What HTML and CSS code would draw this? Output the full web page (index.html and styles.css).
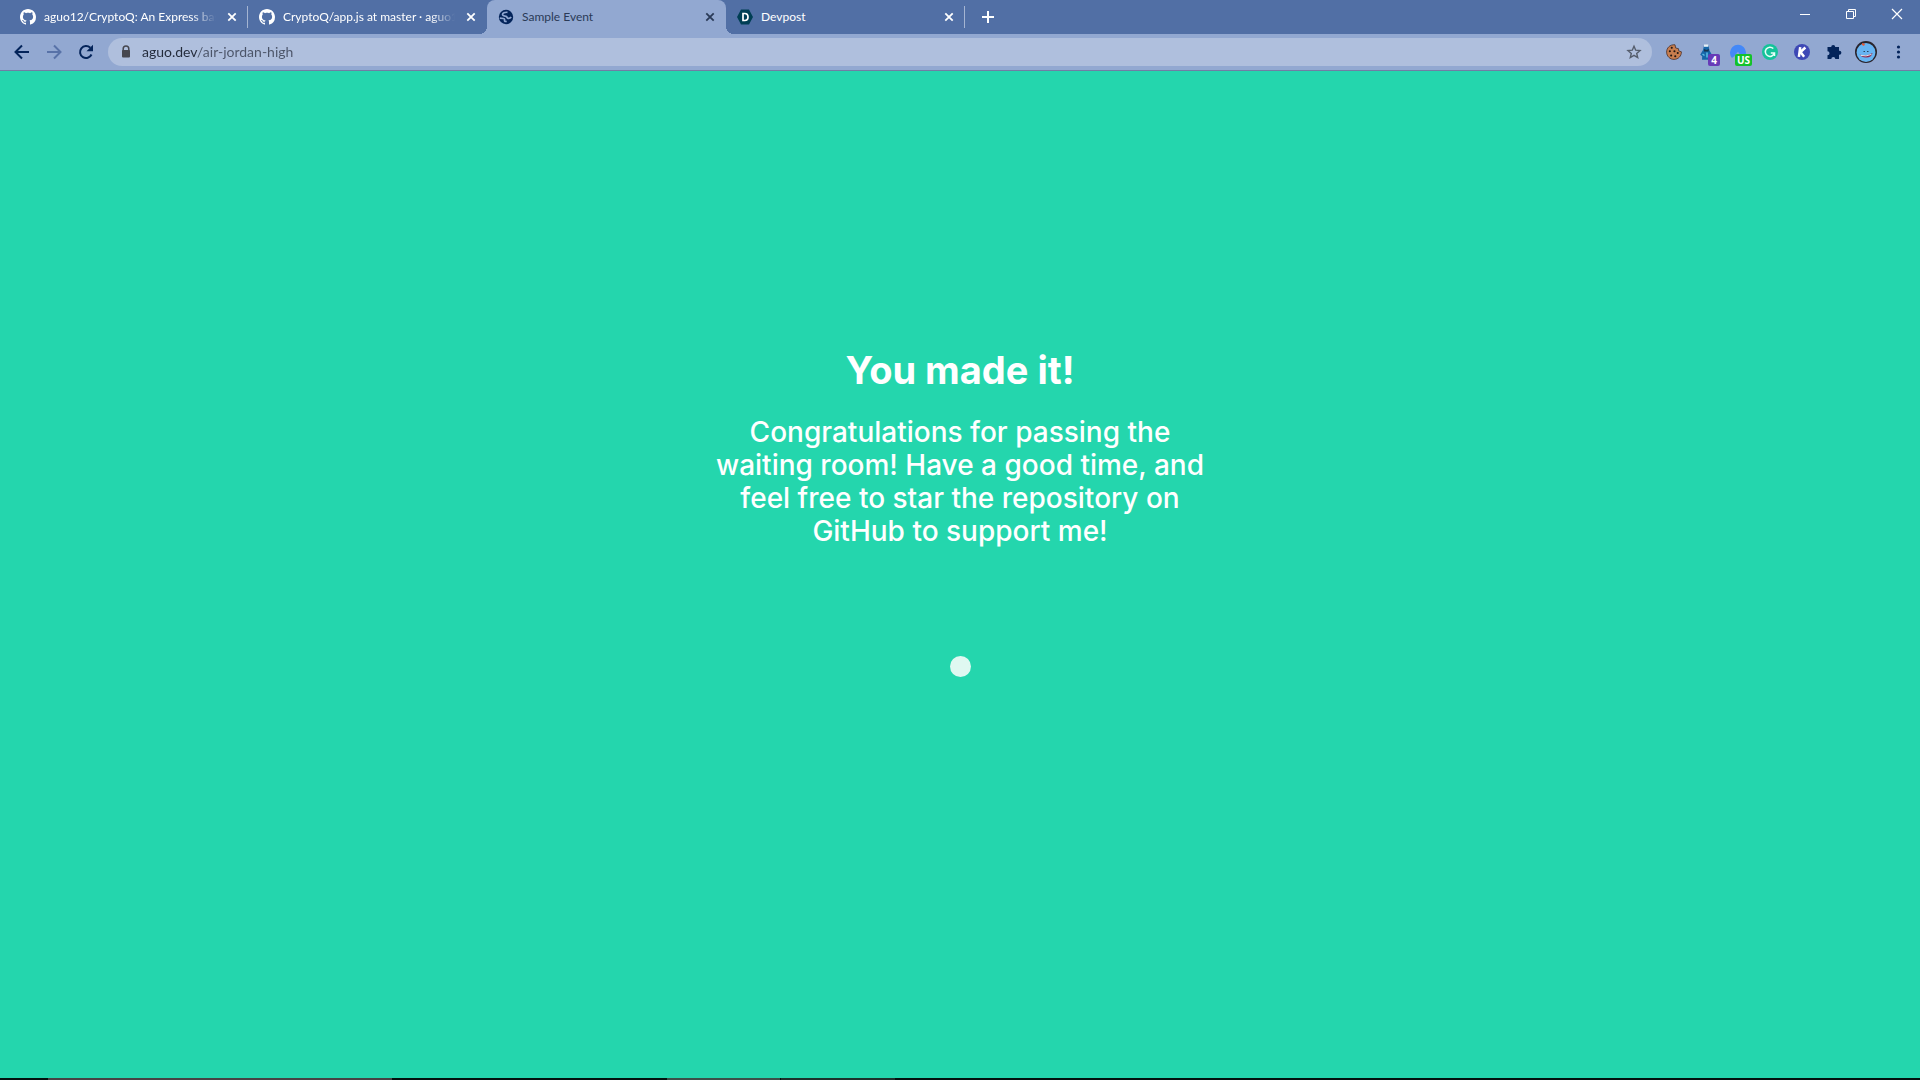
FILE: index.html
```html
<!DOCTYPE html>
<html lang="en">
<head>
<meta charset="utf-8">
<title>Sample Event</title>
<link rel="stylesheet" href="styles.css">
</head>
<body>
<svg class="defs" aria-hidden="true">
  <symbol id="github" viewBox="0 0 16 16"><path d="M8 0C3.58 0 0 3.58 0 8c0 3.54 2.29 6.53 5.47 7.59.4.07.55-.17.55-.38 0-.19-.01-.82-.01-1.49-2.01.37-2.53-.49-2.69-.94-.09-.23-.48-.94-.82-1.13-.28-.15-.68-.52-.01-.53.63-.01 1.08.58 1.23.82.72 1.21 1.87.87 2.33.66.07-.52.28-.87.51-1.07-1.78-.2-3.64-.89-3.64-3.95 0-.87.31-1.59.82-2.15-.08-.2-.36-1.02.08-2.12 0 0 .67-.21 2.2.82.64-.18 1.32-.27 2-.27s1.36.09 2 .27c1.53-1.04 2.2-.82 2.2-.82.44 1.1.16 1.92.08 2.12.51.56.82 1.27.82 2.15 0 3.07-1.87 3.75-3.65 3.95.29.25.54.73.54 1.48 0 1.07-.01 1.93-.01 2.2 0 .21.15.46.55.38A8.01 8.01 0 0 0 16 8c0-4.42-3.58-8-8-8z" fill="currentColor"/></symbol>
  <symbol id="cross" viewBox="0 0 16 16"><path d="M4.300 4.300l7.400 7.400m0-7.400l-7.400 7.400" stroke="currentColor" stroke-width="1.800" fill="none"/></symbol>
</svg>

<header class="browser">
  <div class="strip">
    <div class="tab tab-divided">
      <svg class="favicon"><use href="#github"/></svg>
      <button class="tab-title tab-title-faded">aguo12/CryptoQ: An Express bas</button>
      <button class="tab-close" aria-label="Close tab"><svg><use href="#cross"/></svg></button>
    </div>
    <div class="tab">
      <svg class="favicon"><use href="#github"/></svg>
      <button class="tab-title tab-title-faded">CryptoQ/app.js at master · aguo1</button>
      <button class="tab-close" aria-label="Close tab"><svg><use href="#cross"/></svg></button>
    </div>
    <div class="tab tab-active">
      <svg class="favicon" viewBox="0 0 16 16"><circle cx="8" cy="8" r="7.200" fill="#04245a"/><path d="M9.500 3.300c-2.800-.3-5 .8-5 2.200 0 1.500 2.200 1.500 3.600 1.900 1.300.4.600 1.700 1.900 1.900 1.600.2 2.600-.4 3.200-1.300M1.800 9.200l3.600.3c1.300.1 1.300 1.100 1.100 1.900-.1.900.9 1.300 2.200 1" fill="none" stroke="#90a6d1" stroke-width="1.700"/></svg>
      <button class="tab-title">Sample Event</button>
      <button class="tab-close" aria-label="Close tab"><svg><use href="#cross"/></svg></button>
    </div>
    <div class="tab tab-divided">
      <svg class="favicon" viewBox="0 0 16 16"><path d="M4 .5h8L16 8l-4 7.500H4L0 8z" fill="#003e54"/><path d="M6 4.500h1.700c2.200 0 3.300 1.300 3.300 3.500s-1.100 3.500-3.300 3.500H6z" fill="none" stroke="#fff" stroke-width="1.700"/></svg>
      <button class="tab-title">Devpost</button>
      <button class="tab-close" aria-label="Close tab"><svg><use href="#cross"/></svg></button>
    </div>
    <button class="new-tab" aria-label="New tab"><svg viewBox="0 0 14 14"><path d="M7 1v12M1 7h12" stroke="#fff" stroke-width="2"/></svg></button>
    <div class="window-controls">
      <button aria-label="Minimize"><svg viewBox="0 0 12 12"><path d="M1 6.500h10" stroke="#fff"/></svg></button>
      <button aria-label="Restore"><svg viewBox="0 0 12 12"><path d="M1.500 3.500h7v7h-7zM3.500 3.500v-2h7v7h-2" fill="none" stroke="#fff"/></svg></button>
      <button aria-label="Close"><svg viewBox="0 0 12 12"><path d="M1 1l10 10M11 1L1 11" stroke="#fff" stroke-width="1.200"/></svg></button>
    </div>
  </div>

  <div class="toolbar">
    <nav class="nav">
      <button aria-label="Back"><svg viewBox="0 0 16 16"><path d="M15 8H2M8 1.500L1.500 8 8 14.500" fill="none" stroke="#04245a" stroke-width="2"/></svg></button>
      <button aria-label="Forward"><svg viewBox="0 0 16 16"><path d="M1 8h13M8 1.500L14.500 8 8 14.500" fill="none" stroke="#5872a8" stroke-width="2"/></svg></button>
      <button aria-label="Reload"><svg viewBox="0 0 16 16"><path d="M13.500 10.500A6 6 0 1 1 12.300 3.800" fill="none" stroke="#04245a" stroke-width="2"/><path d="M15 .7v6.500H8.500z" fill="#04245a"/></svg></button>
    </nav>
    <div class="address">
      <svg class="lock" viewBox="0 0 12 14"><path d="M3.200 6V3.800a2.800 2.800 0 0 1 5.600 0V6" fill="none" stroke="#46474f" stroke-width="1.500"/><rect x="2" y="5" width="8" height="7.500" rx="1" fill="#46474f"/></svg>
      <input class="url" type="text" value="aguo.dev/air-jordan-high" aria-label="Address">
      <button class="star" aria-label="Bookmark this tab"><svg viewBox="0 0 16 16"><path d="M8 2.200l1.700 4 4.300.4-3.300 2.800 1 4.200L8 11.400l-3.700 2.200 1-4.200L2 6.600l4.300-.4z" fill="none" stroke="#555d6c" stroke-width="1.400"/></svg></button>
    </div>
    <div class="extensions">
      <button aria-label="Cookies"><svg viewBox="0 0 16 16"><path d="M9 .8C3.800.2.500 4.200.600 8.200c.1 4 3.400 7.300 7.500 7.200 4.300-.1 7.400-3.400 7.300-7.600l-2.700-.9-.2-2.200-2.800-.7z" fill="#c77d4e" stroke="#4a302b" stroke-width=".8"/><path d="M5.700 3.700h.1M3.800 7.200h.1M8.400 7.200h.1M11.700 9h.1M5.100 11.400h.1M9.200 12.300h.1" stroke="#211714" stroke-width="2" stroke-linecap="round"/></svg></button>
      <button aria-label="Wizard, 4"><svg viewBox="0 0 16 16"><path d="M6 1.500h4.500l1 5 2.300 4-1.300 1-.4 4.300H4l.2-3.500-2-1.500L5 6z" fill="#1666a9"/><path d="M6 .5h4.300v2.300H6z" fill="#e8f1f6"/><path d="M6 5l2.500 1L11 5l-.5 2.500H6z" fill="#17334e"/><path d="M4.500 10l2 1.500M9 8.500v5" stroke="#5cbbe4" stroke-width="1.500"/></svg><span class="badge badge-purple">4</span></button>
      <button aria-label="VPN, US"><svg viewBox="0 0 16 16"><path d="M2 14A8 8 0 1 1 14 14l-2.500-4-1.300 1L8 7.800 4.500 12z" fill="#4488f7"/></svg><span class="badge badge-green">US</span></button>
      <button aria-label="Grammar"><svg viewBox="0 0 16 16"><circle cx="8" cy="8" r="8" fill="#15c39a"/><path d="M11.300 4.600A4.600 4.600 0 1 0 12.400 9H8.800M12.500 8.500v3.500" fill="none" stroke="#e8fff8" stroke-width="1.500"/></svg></button>
      <button aria-label="Keywords"><svg viewBox="0 0 16 16"><circle cx="8" cy="8" r="8" fill="#3d48b5"/><path d="M6.200 3.200L4.900 12.800M11.400 3.500L6.500 8l3.600 4.800" fill="none" stroke="#fff" stroke-width="2.500"/></svg></button>
      <button aria-label="Extensions"><svg viewBox="0 0 16 16"><path d="M1.500 3h3.700a2 2 0 1 1 4 0H13v3.700h.4a2 2 0 1 1 0 4H13V15H9.300a2 2 0 0 0-4 0H1.500v-3.800a2 2 0 0 0 0-4z" fill="#04245a"/></svg></button>
      <button class="profile" aria-label="Profile"><svg viewBox="0 0 22 22"><circle cx="11" cy="11" r="11" fill="#29232b"/><circle cx="11" cy="11.500" r="9.400" fill="#67b4f2"/><path d="M7 2l3 1-1 2-2-1z" fill="#e65a36"/><path d="M8.500 10.500h1.500M12 10.500h1.500" stroke="#26415d" stroke-width="1.200"/><path d="M4.500 13.500q6.500 2.500 13-1.500-1 4.500-6.500 4.500-4.500 0-6.500-3z" fill="#8e244d"/><path d="M5.500 14.400q5.500 1.500 11-1" stroke="#dce5ee" stroke-width="1" fill="none"/></svg></button>
      <button aria-label="Menu"><svg viewBox="0 0 16 16"><g fill="#04245a"><circle cx="8.500" cy="3" r="1.600"/><circle cx="8.500" cy="8" r="1.600"/><circle cx="8.500" cy="13" r="1.600"/></g></svg></button>
    </div>
  </div>
</header>

<main class="page">
  <h1>You made it!</h1>
  <p>Congratulations for passing the<br>waiting room! Have a good time, and<br>feel free to star the repository on<br>GitHub to support me!</p>
  <div class="pulse" role="status" aria-label="Loading"></div>
</main>

<footer class="taskbar">
  <span class="gap-start"></span><span class="search"></span><span class="gap-middle"></span><span class="app app-focused"></span><span class="app"></span>
</footer>
</body>
</html>
```

FILE: styles.css
```css
* { box-sizing: border-box; }

body {
  margin: 0;
  min-height: 100vh;
  display: flex;
  flex-direction: column;
  background: #24d6ad;
  font-family: Lato, "Open Sans", sans-serif;
}

button {
  display: flex;
  align-items: center;
  justify-content: center;
  padding: 0;
  border: 0;
  background: none;
  color: inherit;
  font: inherit;
}

svg { display: block; flex: none; width: 16px; height: 16px; }
.defs { position: absolute; width: 0; height: 0; }

/* Tab strip */
.strip {
  display: flex;
  height: 34px;
  padding-left: 9px;
  background: #516fa5;
  color: #fff;
}

.tab {
  position: relative;
  display: flex;
  align-items: center;
  flex: 0 1 239px;
  min-width: 0;
  padding: 0 8px 0 11px;
  gap: 8px;
  font-size: 12px;
}

.tab-divided {
  padding-right: 7px;
  border-right: 1px solid transparent;
  border-image: linear-gradient(transparent 7px, #a5b5d2 7px, #a5b5d2 27px, transparent 27px) 1;
}

.tab-active {
  background: #92a8d1;
  border-radius: 8px 8px 0 0;
  color: #2a3a57;
}

.tab-active::before,
.tab-active::after {
  content: "";
  position: absolute;
  bottom: 0;
  width: 8px;
  height: 8px;
}
.tab-active::before { left: -8px; background: radial-gradient(circle at 0 0, transparent 8px, #92a8d1 8px); }
.tab-active::after { right: -8px; background: radial-gradient(circle at 100% 0, transparent 8px, #92a8d1 8px); }

.tab-title {
  flex: 1;
  min-width: 0;
  justify-content: flex-start;
  white-space: nowrap;
  line-height: 20px;
}
.tab-title-faded { mask-image: linear-gradient(to right, #000 calc(100% - 24px), transparent); }

.new-tab { width: 46px; }
.new-tab svg { width: 14px; height: 14px; }

.window-controls { display: flex; height: 28px; margin-left: auto; }
.window-controls button { width: 46px; }
.window-controls svg { width: 12px; height: 12px; }

/* Toolbar */
.toolbar {
  display: flex;
  align-items: center;
  height: 37px;
  padding: 0 6px 0 8px;
  background: #92a8d1;
  border-bottom: 1px solid #707da5;
}

.nav { display: flex; gap: 4px; margin-right: 8px; }
.nav button { width: 28px; height: 28px; }

.address {
  flex: 1;
  display: flex;
  align-items: center;
  height: 28px;
  padding: 0 10px 0 12px;
  border-radius: 14px;
  background: #afbfdd;
}

.lock { width: 12px; height: 14px; }

.url {
  flex: 1;
  min-width: 0;
  margin-left: 10px;
  padding: 0;
  border: 0;
  outline: 0;
  font: 14px/20px Lato, "Open Sans", sans-serif;
  background: linear-gradient(to right, #222a3a 56px, #4b5468 56px);
  background-clip: text;
  -webkit-text-fill-color: transparent;
}

.extensions { display: flex; margin-left: 6px; }
.extensions button { position: relative; width: 32px; height: 32px; }
.extensions .profile svg { width: 22px; height: 22px; }

.badge {
  position: absolute;
  right: 2px;
  bottom: 2px;
  height: 12px;
  padding: 0 3px;
  border-radius: 2px;
  color: #fff;
  font: 700 10px/12px "Open Sans", sans-serif;
}
.badge-purple { background: #673ab7; }
.badge-green { background: #12c22b; padding: 0 2px; }

/* Page */
.page {
  flex: 1;
  display: flex;
  flex-direction: column;
  align-items: center;
  padding-top: 275px;
  color: #fff;
  font-family: Inter, sans-serif;
  text-align: center;
}

h1 { margin: 0; font-size: 38px; line-height: 48px; font-weight: 700; }
p { margin: 22px 0 0; font-size: 28px; line-height: 33px; font-weight: 500; }

.pulse {
  width: 21px;
  height: 21px;
  margin-top: 108px;
  border-radius: 50%;
  background: #dff8f1;
}

/* Sliver of the taskbar */
.taskbar { display: flex; height: 2px; background: #02110e; }
.gap-start { width: 48px; }
.search { width: 344px; background: #474344; }
.gap-middle { width: 275px; }
.app { width: 114px; background: #1c302b; }
.app-focused { background: #3c5049; border-right: 1px solid #02110e; }
```
